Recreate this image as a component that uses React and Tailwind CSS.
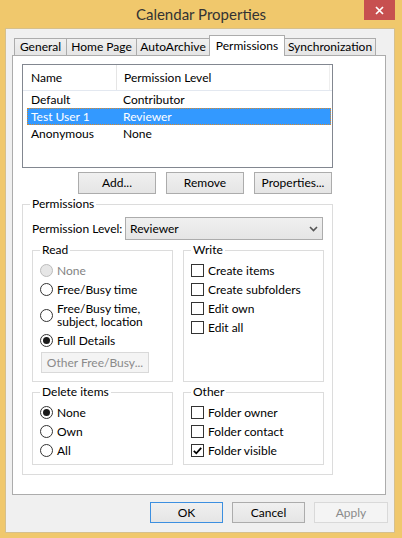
import React from "react";

function Radio({ checked, disabled }) {
  return (
    <span
      className={
        disabled
          ? "w-[13px] h-[13px] rounded-full border border-[#bcbcbc] bg-[#e6e6e6] flex items-center justify-center shrink-0"
          : "w-[13px] h-[13px] rounded-full border border-[#333333] bg-white flex items-center justify-center shrink-0"
      }
    >
      {checked && <span className="w-[7px] h-[7px] rounded-full bg-[#1a1a1a]" />}
    </span>
  );
}

function Check({ checked }) {
  return (
    <span className="w-[13px] h-[13px] border border-[#333333] bg-white flex items-center justify-center shrink-0">
      {checked && (
        <svg width="9" height="8" viewBox="0 0 9 8">
          <path d="M0.8 3.8 L3.3 6.3 L8.2 0.8" stroke="#000" strokeWidth="1.8" fill="none" />
        </svg>
      )}
    </span>
  );
}

function RadioRow({ label, checked, disabled }) {
  return (
    <div className="h-[19px] flex items-center gap-[4px] whitespace-nowrap">
      <Radio checked={checked} disabled={disabled} />
      <span className={disabled ? "text-[#838383]" : "text-black"}>{label}</span>
    </div>
  );
}

function CheckRow({ label, checked }) {
  return (
    <div className="h-[19px] flex items-center gap-[4px] whitespace-nowrap">
      <Check checked={checked} />
      <span>{label}</span>
    </div>
  );
}

function Btn({ children, w, primary, disabled, h = "h-[22px]" }) {
  let cls = "flex items-center justify-center border whitespace-nowrap ";
  if (disabled) cls += "border-[#d9d9d9] bg-[#f4f4f4] text-[#8a8a8a] ";
  else if (primary) cls += "border-[#3c8fe0] bg-gradient-to-b from-[#f0f0f0] to-[#e5e5e5] text-black ";
  else cls += "border-[#acacac] bg-gradient-to-b from-[#f0f0f0] to-[#e5e5e5] text-black ";
  return <div className={cls + w + " " + h}>{children}</div>;
}

function Tab({ label, w, selected, first }) {
  if (selected)
    return (
      <div className={"relative z-10 h-[21px] bg-white border-t border-l border-r border-[#acacac] flex items-center justify-center -ml-px whitespace-nowrap pb-[1px] " + w}>
        {label}
      </div>
    );
  return (
    <div
      className={
        "h-[18px] border border-[#acacac] bg-gradient-to-b from-[#f0f0f0] to-[#e5e5e5] flex items-center justify-center whitespace-nowrap " +
        (first ? "" : "-ml-px ") +
        w
      }
    >
      {label}
    </div>
  );
}

export default function App() {
  return (
    <div className="w-[402px] h-[538px] bg-[#f0c86c] flex flex-col overflow-hidden font-['Lato',sans-serif] text-[12px] text-black">
      {/* Title bar */}
      <div className="h-[28px] grid grid-cols-[1fr_auto_1fr]">
        <div />
        <div className="text-[15px] leading-[28px] text-[#333333] whitespace-nowrap">Calendar Properties</div>
        <div className="flex justify-end items-start pr-[7px]">
          <div className="w-[31px] h-[20px] bg-[#c75050] flex items-center justify-center">
            <svg width="9" height="9" viewBox="0 0 9 9">
              <path d="M1 1 L8 8 M8 1 L1 8" stroke="#fff" strokeWidth="1.7" />
            </svg>
          </div>
        </div>
      </div>

      {/* Client area */}
      <div className="ml-[5px] w-[390px] h-[505px] border border-[#d6c08c] bg-[#f0f0f0] flex flex-col">
        {/* Tabs */}
        <div className="mt-[6px] ml-[8px] h-[21px] flex items-end">
          <Tab label="General" w="w-[53px]" first />
          <Tab label="Home Page" w="w-[71px]" />
          <Tab label="AutoArchive" w="w-[74px]" />
          <Tab label="Permissions" w="w-[76px]" selected />
          <Tab label="Synchronization" w="w-[92px]" />
        </div>

        {/* Panel */}
        <div className="-mt-px ml-[6px] w-[374px] h-[440px] bg-white border border-[#acacac] pt-[8px] pl-[9px]">
          {/* List box */}
          <div className="w-[311px] h-[104px] border border-[#828790] bg-white flex flex-col">
            <div className="h-[26px] flex border-b border-[#e3e8f0]">
              <div className="w-[94px] pl-[8px] flex items-center border-r border-[#e5e5e5]">Name</div>
              <div className="flex-1 pl-[7px] flex items-center border-r border-[#eeeeee] mr-[2px]">Permission Level</div>
            </div>
            <div className="ml-[4px] mr-[1px] flex flex-col">
              <div className="h-[17px] flex items-center border border-transparent">
                <div className="w-[95px] pl-[3px]">Default</div>
                <div>Contributor</div>
              </div>
              <div className="h-[17px] flex items-center bg-[#3399ff] text-white border border-dotted border-[#d9882a]">
                <div className="w-[95px] pl-[3px]">Test User 1</div>
                <div>Reviewer</div>
              </div>
              <div className="h-[17px] flex items-center border border-transparent">
                <div className="w-[95px] pl-[3px]">Anonymous</div>
                <div>None</div>
              </div>
            </div>
          </div>

          {/* List buttons */}
          <div className="w-[311px] mt-[4px] flex justify-end gap-[10px] pr-[1px]">
            <Btn w="w-[78px]">Add...</Btn>
            <Btn w="w-[78px]">Remove</Btn>
            <Btn w="w-[78px]">Properties...</Btn>
          </div>

          {/* Permissions group */}
          <fieldset className="mt-[2px] w-[311px] border border-[#dcdcdc] pb-[9px]">
            <legend className="ml-[7px] px-[2px] leading-[16px]">Permissions</legend>
            <div className="mt-[5px] pl-[9px] pr-[9px] flex items-center">
              <span className="whitespace-nowrap">Permission Level:</span>
              <div className="ml-auto w-[198px] h-[23px] border border-[#acacac] bg-gradient-to-b from-[#f0f0f0] to-[#e5e5e5] flex items-center pl-[4px] pr-[4px]">
                <span className="flex-1">Reviewer</span>
                <svg width="9" height="6" viewBox="0 0 9 6">
                  <path d="M1 1 L4.5 4.5 L8 1" stroke="#555" strokeWidth="1.6" fill="none" />
                </svg>
              </div>
            </div>

            <div className="mt-[2px] pl-[9px] flex gap-[10px]">
              <fieldset className="w-[141px] border border-[#dcdcdc] pl-[7px] pb-[8px]">
                <legend className="px-[2px] leading-[16px]">Read</legend>
                <div className="mt-[3px] flex flex-col">
                  <RadioRow label="None" disabled />
                  <RadioRow label="Free/Busy time" />
                  <div className="h-[32px] flex items-center gap-[4px]">
                    <Radio />
                    <span className="leading-[13px] whitespace-nowrap">
                      Free/Busy time,
                      <br />
                      subject, location
                    </span>
                  </div>
                  <RadioRow label="Full Details" checked />
                </div>
                <div className="mt-[2px] ml-[1px]">
                  <Btn w="w-[108px]" h="h-[21px]" disabled>
                    Other Free/Busy...
                  </Btn>
                </div>
              </fieldset>
              <fieldset className="w-[141px] border border-[#dcdcdc] pl-[7px]">
                <legend className="px-[2px] leading-[16px]">Write</legend>
                <div className="mt-[3px] flex flex-col">
                  <CheckRow label="Create items" />
                  <CheckRow label="Create subfolders" />
                  <CheckRow label="Edit own" />
                  <CheckRow label="Edit all" />
                </div>
              </fieldset>
            </div>

            <div className="mt-[2px] pl-[9px] flex gap-[10px]">
              <fieldset className="w-[141px] border border-[#dcdcdc] pl-[7px] pb-[4px]">
                <legend className="px-[2px] leading-[16px]">Delete items</legend>
                <div className="mt-[3px] flex flex-col">
                  <RadioRow label="None" checked />
                  <RadioRow label="Own" />
                  <RadioRow label="All" />
                </div>
              </fieldset>
              <fieldset className="w-[141px] border border-[#dcdcdc] pl-[7px] pb-[4px]">
                <legend className="px-[2px] leading-[16px]">Other</legend>
                <div className="mt-[3px] flex flex-col">
                  <CheckRow label="Folder owner" />
                  <CheckRow label="Folder contact" />
                  <CheckRow label="Folder visible" checked />
                </div>
              </fieldset>
            </div>
          </fieldset>
        </div>

        {/* Dialog buttons */}
        <div className="mt-[7px] mr-[6px] flex justify-end gap-[9px]">
          <Btn w="w-[73px]" h="h-[21px]" primary>
            OK
          </Btn>
          <Btn w="w-[73px]" h="h-[21px]">
            Cancel
          </Btn>
          <Btn w="w-[74px]" h="h-[21px]" disabled>
            Apply
          </Btn>
        </div>
      </div>
    </div>
  );
}
